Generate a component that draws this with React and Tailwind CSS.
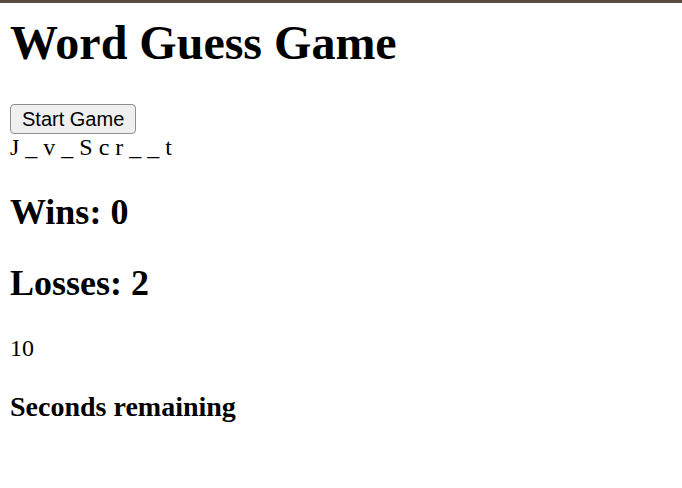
import React, { useState } from 'react';

const word = "J _ v _ S c r _ _ t";

export default function App() {
    const [wins] = useState(0);
    const [losses] = useState(2);
    const [seconds] = useState(10);

    return (
        <div className="min-h-screen bg-white text-black font-['Liberation_Serif',serif]">
            <div className="h-[3px] bg-[#5b4a42]" />
            <div className="px-[10px]">
                <h1 className="mt-[12px] text-[48px] leading-[55px] font-bold">Word Guess Game</h1>
                <button className="mt-[34px] h-[30px] px-[11px] rounded-[4px] border border-[#8f8f8f] bg-[#efefef] font-['Liberation_Sans',Arial,sans-serif] text-[20px] leading-[23px] text-black">
                    Start Game
                </button>
                <div className="text-[24px] leading-[27.6px]">{word}</div>
                <h2 className="mt-[30px] text-[36px] leading-[41.4px] font-bold">Wins: {wins}</h2>
                <h2 className="mt-[30px] text-[36px] leading-[41.4px] font-bold">Losses: {losses}</h2>
                <p className="mt-[31px] text-[24px] leading-[27.6px]">{seconds}</p>
                <h3 className="mt-[28px] text-[28px] leading-[32.2px] font-bold">Seconds remaining</h3>
            </div>
        </div>
    );
}
